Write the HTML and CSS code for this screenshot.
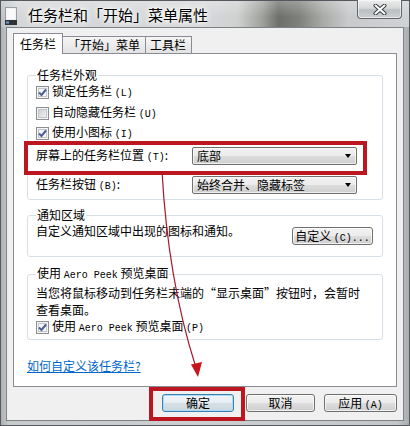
FILE: index.html
```html
<!DOCTYPE html>
<html lang="zh-CN">
<head>
<meta charset="utf-8">
<title>任务栏和「开始」菜单属性</title>
<link rel="stylesheet" href="styles.css">
</head>
<body>
<div class="window">
  <div class="titlebar">
    <svg class="app-icon" width="12" height="18" viewBox="0 0 12 18">
      <rect x="0.5" y="0.5" width="11" height="13" fill="#eef0f1" stroke="#9a9ea2"/>
      <rect x="2" y="2" width="8" height="10" fill="#fafafa"/>
      <rect x="0" y="13" width="12" height="5" fill="#2f3336"/>
      <rect x="1" y="14.5" width="3" height="2" fill="#6fa0d8"/>
    </svg>
    <span class="title">任务栏和「开始」菜单属性</span>
    <div class="close-btn">
      <svg width="14" height="11" viewBox="0 0 14 11">
        <path d="M2.5 1.5 L11.5 9.5 M11.5 1.5 L2.5 9.5" stroke="#3a3d40" stroke-width="4" stroke-linecap="round"/>
        <path d="M2.5 1.5 L11.5 9.5 M11.5 1.5 L2.5 9.5" stroke="#ffffff" stroke-width="2" stroke-linecap="round"/>
      </svg>
    </div>
  </div>

  <div class="client">
    <div class="tabs">
      <div class="tab tab-active">任务栏</div>
      <div class="tab tab-wide">「开始」菜单</div>
      <div class="tab tab-wide">工具栏</div>
    </div>

    <div class="panel">
      <fieldset class="group group-appearance">
        <legend>任务栏外观</legend>
        <div class="check-row row-first">
          <span class="cb"><svg width="11" height="11" viewBox="0 0 11 11"><path d="M2 5.5 L4.5 8 L9 2.5" stroke="#4a5f95" stroke-width="2" fill="none"/></svg></span>
          <span class="check-label">锁定任务栏 <span class="en">(L)</span></span>
        </div>
        <div class="check-row">
          <span class="cb cb-off"></span>
          <span class="check-label">自动隐藏任务栏 <span class="en">(U)</span></span>
        </div>
        <div class="check-row">
          <span class="cb"><svg width="11" height="11" viewBox="0 0 11 11"><path d="M2 5.5 L4.5 8 L9 2.5" stroke="#4a5f95" stroke-width="2" fill="none"/></svg></span>
          <span class="check-label">使用小图标 <span class="en">(I)</span></span>
        </div>
        <div class="field-row field-first">
          <span class="field-label">屏幕上的任务栏位置 <span class="en">(T)</span>:</span>
          <div class="combo"><span class="combo-text">底部</span><span class="combo-arrow"></span></div>
        </div>
        <div class="field-row field-second">
          <span class="field-label">任务栏按钮 <span class="en">(B)</span>:</span>
          <div class="combo"><span class="combo-text">始终合并、隐藏标签</span><span class="combo-arrow"></span></div>
        </div>
      </fieldset>

      <fieldset class="group group-notify">
        <legend>通知区域</legend>
        <div class="notify-row">
          <span class="notify-text">自定义通知区域中出现的图标和通知。</span>
          <button class="btn btn-custom">自定义 <span class="en">(C)...</span></button>
        </div>
      </fieldset>

      <fieldset class="group group-peek">
        <legend>使用 <span class="en">Aero Peek</span> 预览桌面</legend>
        <p class="peek-text">当您将鼠标移动到任务栏末端的“显示桌面”按钮时，会暂时<br>查看桌面。</p>
        <div class="check-row peek-check">
          <span class="cb"><svg width="11" height="11" viewBox="0 0 11 11"><path d="M2 5.5 L4.5 8 L9 2.5" stroke="#4a5f95" stroke-width="2" fill="none"/></svg></span>
          <span class="check-label">使用 <span class="en">Aero Peek</span> 预览桌面 <span class="en">(P)</span></span>
        </div>
      </fieldset>

      <a class="help-link" href="#">如何自定义该任务栏?</a>
    </div>

    <div class="buttons">
      <button class="btn btn-ok">确定</button>
      <button class="btn btn-cancel">取消</button>
      <button class="btn btn-apply">应用 <span class="en">(A)</span></button>
    </div>
  </div>

  <svg class="annotations" width="410" height="426" viewBox="0 0 410 426">
    <rect x="26" y="143" width="339" height="30" fill="none" stroke="#bc1620" stroke-width="4"/>
    <rect x="151" y="389" width="92" height="30" fill="none" stroke="#bc1620" stroke-width="4"/>
    <path d="M162 171 Q168 280 195.5 366" stroke="#a8162a" stroke-width="1.2" fill="none"/>
    <path d="M191 364.5 L202 362 L198 377 Z" fill="#c8141c"/>
  </svg>
</div>
</body>
</html>
```

FILE: styles.css
```css
* {
  box-sizing: border-box;
}

html,
body {
  margin: 0;
  padding: 0;
}

body {
  width: 410px;
  height: 426px;
  overflow: hidden;
  font-family: "Noto Sans CJK SC", sans-serif;
  font-size: 12px;
  color: #000;
  background: #c9cccd;
}

.en {
  font-family: "Liberation Mono", "Noto Sans CJK SC", monospace;
  font-size: 10px;
}

.window {
  position: relative;
  width: 410px;
  height: 426px;
  display: flex;
  flex-direction: column;
  border: 1px solid #55595d;
  background: linear-gradient(90deg, #aeb2b4 0, #c8cbcc 2%, #cdd0d1 50%, #c4c7c8 97%, #a9adb0 100%);
}

/* ---------- title bar ---------- */
.titlebar {
  height: 26px;
  display: flex;
  align-items: flex-start;
  background:
    linear-gradient(180deg, rgba(255, 255, 255, 0.25), rgba(255, 255, 255, 0) 60%),
    linear-gradient(90deg, #bfc2c4 0, #d4d6d7 4%, #d6d8d9 50%, #cfd1d1 58%, #9fa19d 64%, #6e706c 68%, #7e807b 73%, #a9aba8 79%, #c8cacb 85%, #d0d2d3 100%);
}

.app-icon {
  margin: 6px 0 0 4px;
  flex: none;
}

.title {
  margin: 4px 0 0 11px;
  font-size: 15px;
  line-height: 20px;
  color: #000;
  text-shadow: 0 0 6px #fff, 0 0 3px #fff, 0 0 10px #fff;
  white-space: nowrap;
}

.close-btn {
  margin: -1px 7px 0 auto;
  width: 45px;
  height: 19px;
  display: flex;
  align-items: center;
  justify-content: center;
  border: 1px solid #62666a;
  border-top: none;
  border-radius: 0 0 4px 4px;
  background: linear-gradient(180deg, #eceded 0, #d6d8d9 45%, #bcbfc1 55%, #cdd0d2 100%);
  box-shadow: inset 0 0 0 1px rgba(255, 255, 255, 0.55);
}

/* ---------- client area ---------- */
.client {
  margin: 0 5px;
  height: 394px;
  border: 1px solid #7d8185;
  background: #f0f0f0;
  padding: 5px 6px 8px 6px;
  display: flex;
  flex-direction: column;
}

.tabs {
  display: flex;
  align-items: flex-end;
  height: 21px;
  margin-bottom: -1px;
}

.tab {
  height: 17px;
  margin-bottom: 1px;
  padding: 0 4px;
  line-height: 16px;
  border: 1px solid #898c95;
  border-bottom: none;
  background: linear-gradient(180deg, #f5f5f5 0, #ececec 50%, #e2e2e2 100%);
  white-space: nowrap;
}

.tab-active {
  position: relative;
  z-index: 1;
  height: 21px;
  margin-bottom: 0;
  padding: 1px 6px 0 6px;
  line-height: 18px;
  background: #fff;
}

.tab-wide {
  margin-left: -1px;
  padding: 0 5px 0 4px;
}

.tab-active + .tab-wide {
  margin-left: 0;
  border-left: none;
  padding-left: 5px;
}

.panel {
  height: 334px;
  border: 1px solid #898c95;
  background: #fff;
  padding: 14px 13px 0 13px;
}

/* ---------- group boxes ---------- */
.group {
  margin: 0;
  min-width: 0;
  border: 1px solid #d5dfe5;
  border-radius: 3px;
  padding: 0 9px 5px 8px;
}

.group legend {
  padding: 0 1px;
  line-height: 14px;
  white-space: nowrap;
}

.check-row {
  display: flex;
  align-items: center;
  height: 20px;
}

.row-first {
  height: 21px;
}

.cb {
  flex: none;
  width: 13px;
  height: 13px;
  margin-right: 3px;
  border: 1px solid #8e8f8f;
  background: linear-gradient(135deg, #f1f2f3 0, #fafafa 100%);
  box-shadow: inset 0 0 0 1px #f4f4f4, inset 0 0 0 2px #c2c6cb;
  display: flex;
  align-items: center;
  justify-content: center;
}

.cb-off {
  background: linear-gradient(135deg, #c3c7cc 0, #e4e6e8 60%, #f4f4f4 100%);
}

.check-label {
  line-height: 14px;
  white-space: nowrap;
}

.field-row {
  display: flex;
  align-items: center;
  height: 18px;
}

.field-first {
  margin-top: 4px;
}

.field-second {
  margin-top: 11px;
}

.field-label {
  width: 156px;
  flex: none;
  line-height: 14px;
  white-space: nowrap;
}

.combo {
  width: 165px;
  height: 18px;
  display: flex;
  align-items: center;
  padding: 0 5px 0 4px;
  border: 1px solid #707070;
  border-radius: 2px;
  background: linear-gradient(180deg, #f2f2f2 0, #ebebeb 50%, #dddddd 50%, #cfcfcf 100%);
  box-shadow: inset 0 0 0 1px rgba(255, 255, 255, 0.6);
}

.combo-text {
  flex: 1;
  line-height: 14px;
  white-space: nowrap;
}

.combo-arrow {
  width: 0;
  height: 0;
  border-left: 3.5px solid transparent;
  border-right: 3.5px solid transparent;
  border-top: 4px solid #000;
  margin-right: 0;
}

.group-notify {
  margin-top: 8px;
  padding: 2px 9px 11px 8px;
}

.notify-row {
  display: flex;
  align-items: flex-start;
}

.notify-text {
  line-height: 14px;
  white-space: nowrap;
}

.group-peek {
  margin-top: 9px;
  padding: 1px 9px 3px 8px;
}

.peek-text {
  margin: 0;
  line-height: 17px;
}

.peek-check {
  margin-top: 0;
  height: 18px;
}

.help-link {
  display: block;
  width: max-content;
  margin-top: 19px;
  line-height: 14px;
  color: #0066cc;
  text-decoration: underline;
}

/* ---------- buttons ---------- */
.btn {
  height: 18px;
  padding: 0;
  font-family: "Noto Sans CJK SC", sans-serif;
  font-size: 12px;
  line-height: 16px;
  color: #000;
  border: 1px solid #707070;
  border-radius: 3px;
  background: linear-gradient(180deg, #f2f2f2 0, #ebebeb 50%, #dddddd 50%, #cfcfcf 100%);
  box-shadow: inset 0 0 0 1px rgba(255, 255, 255, 0.7);
  white-space: nowrap;
}

.btn-custom {
  width: 81px;
  margin: 3px 0 0 auto;
}

.buttons {
  display: flex;
  justify-content: flex-end;
  margin-top: 7px;
}

.btn-ok {
  width: 72px;
  border-color: #3c7fb1;
  background: linear-gradient(180deg, #f1f5f8 0, #e6edf2 50%, #d6e0e7 50%, #cbd6de 100%);
  box-shadow: inset 0 0 0 1px #a9dbf6;
}

.btn-cancel {
  width: 69px;
  margin-left: 12px;
}

.btn-apply {
  width: 73px;
  margin-left: 9px;
}

/* ---------- annotation overlay ---------- */
.annotations {
  position: absolute;
  top: -1px;
  left: -1px;
  pointer-events: none;
}
```
